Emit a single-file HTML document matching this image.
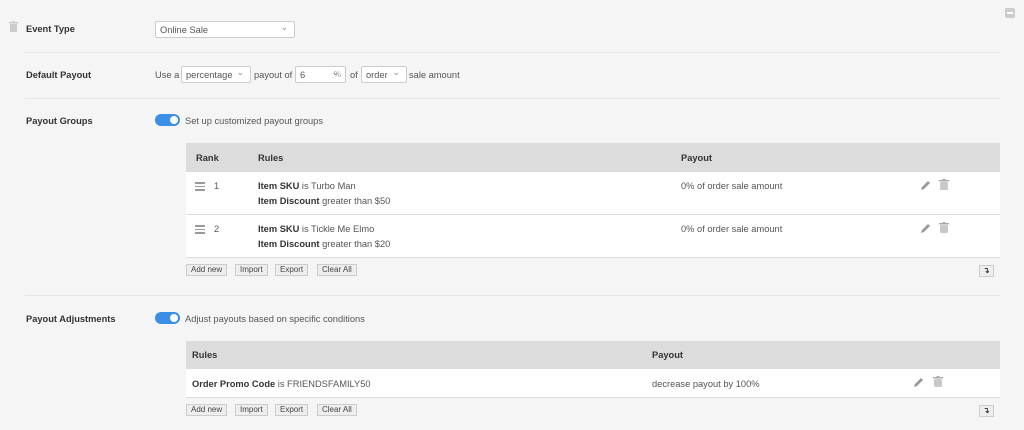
<!DOCTYPE html>
<html><head><meta charset="utf-8"><style>
*{margin:0;padding:0;box-sizing:border-box}
body{width:1024px;height:430px;background:#f5f5f5;font-family:"Liberation Sans",sans-serif;font-size:9.3px;color:#555;position:relative;overflow:hidden}
.a{position:absolute}
.lbl{font-weight:bold;color:#333;font-size:9.3px}
.hr{position:absolute;left:25px;width:975px;height:1px;background:#e6e6e6}
.sel{position:absolute;background:#fff;border:1px solid #ccc;border-radius:2px;height:17px;line-height:16px;padding-left:4px;color:#555}
.sel::after{content:"⌄";position:absolute;right:6px;top:-3px;font-size:9px;color:#888}
.tog{position:absolute;width:25px;height:12px;border-radius:6px;background:#3a8ee6}
.tog::after{content:"";position:absolute;right:2px;top:2px;width:8px;height:8px;border-radius:50%;background:#fff}
.th{position:absolute;left:186px;width:814px;background:#dcdcdc;font-weight:bold;color:#333}
.tr{position:absolute;left:186px;width:814px;background:#fff;border-bottom:1px solid #ddd}
.btn{position:absolute;height:12px;line-height:10px;border:1px solid #ccc;background:#eee;font-size:8px;padding:0 4px;color:#444}
b{color:#333}
.ico{position:absolute}
</style></head><body>
<svg class="ico" style="left:9px;top:21px" width="9" height="11" viewBox="0 0 9 11"><rect x="0" y="1" width="9" height="1.5" fill="#ccc"/><rect x="3" y="0" width="3" height="1.5" fill="#ccc"/><rect x="1" y="3" width="7" height="8" fill="#ccc"/></svg>
<div class="a lbl" style="left:26px;top:24px">Event Type</div>
<div class="sel" style="left:155px;top:21px;width:140px">Online Sale</div>
<div class="a" style="left:1005px;top:8px;width:10px;height:10px;background:#ccc;border-radius:2px"><div style="margin:4px 2px;height:2px;background:#fff"></div></div>
<div class="hr" style="top:52px"></div>
<div class="a lbl" style="left:26px;top:70px">Default Payout</div>
<div class="a" style="left:155px;top:70px">Use a</div>
<div class="sel" style="left:181px;top:66px;width:70px">percentage</div>
<div class="a" style="left:254px;top:70px">payout of</div>
<div class="sel" style="left:295px;top:66px;width:51px">6<span style="position:absolute;right:4px;color:#999;font-size:8px">%</span></div>
<div class="a" style="left:350px;top:70px">of</div>
<div class="sel" style="left:361px;top:66px;width:46px">order</div>
<div class="a" style="left:409px;top:70px">sale amount</div>
<div class="hr" style="top:98px"></div>
<div class="a lbl" style="left:26px;top:116px">Payout Groups</div>
<div class="tog" style="left:155px;top:114px"></div>
<div class="a" style="left:185px;top:116px">Set up customized payout groups</div>

<div class="th" style="top:143px;height:29px"></div>
<div class="a lbl" style="left:196px;top:153px">Rank</div>
<div class="a lbl" style="left:258px;top:153px">Rules</div>
<div class="a lbl" style="left:681px;top:153px">Payout</div>
<div class="tr" style="top:172px;height:43px"></div>
<div class="tr" style="top:215px;height:43px"></div>
<div class="a" style="left:195px;top:182px;width:10px"><div style="height:1.5px;background:#999;margin-bottom:2px"></div><div style="height:1.5px;background:#999;margin-bottom:2px"></div><div style="height:1.5px;background:#999"></div></div>
<div class="a" style="left:214px;top:181px">1</div>
<div class="a" style="left:258px;top:181px"><b>Item SKU</b> is Turbo Man</div>
<div class="a" style="left:258px;top:196px"><b>Item Discount</b> greater than $50</div>
<div class="a" style="left:681px;top:181px">0% of order sale amount</div>
<div class="a" style="left:195px;top:225px;width:10px"><div style="height:1.5px;background:#999;margin-bottom:2px"></div><div style="height:1.5px;background:#999;margin-bottom:2px"></div><div style="height:1.5px;background:#999"></div></div>
<div class="a" style="left:214px;top:224px">2</div>
<div class="a" style="left:258px;top:224px"><b>Item SKU</b> is Tickle Me Elmo</div>
<div class="a" style="left:258px;top:239px"><b>Item Discount</b> greater than $20</div>
<div class="a" style="left:681px;top:224px">0% of order sale amount</div>

<svg class="ico" style="left:920px;top:180px" width="11" height="11" viewBox="0 0 11 11"><path d="M1 10 L2 7 L8 1 L10 3 L4 9 Z" fill="#999"/></svg>
<svg class="ico" style="left:939px;top:179px" width="10" height="11" viewBox="0 0 10 11"><rect x="0" y="1" width="10" height="1.5" fill="#aaa"/><rect x="3.5" y="0" width="3" height="1.5" fill="#aaa"/><path d="M1 3h8v8H1z M3 4v6 M5 4v6 M7 4v6" fill="#aaa" stroke="#fff" stroke-width=".7"/></svg>
<svg class="ico" style="left:920px;top:223px" width="11" height="11" viewBox="0 0 11 11"><path d="M1 10 L2 7 L8 1 L10 3 L4 9 Z" fill="#999"/></svg>
<svg class="ico" style="left:939px;top:222px" width="10" height="11" viewBox="0 0 10 11"><rect x="0" y="1" width="10" height="1.5" fill="#aaa"/><rect x="3.5" y="0" width="3" height="1.5" fill="#aaa"/><path d="M1 3h8v8H1z M3 4v6 M5 4v6 M7 4v6" fill="#aaa" stroke="#fff" stroke-width=".7"/></svg>

<div class="btn" style="left:186px;top:264px">Add new</div>
<div class="btn" style="left:235px;top:264px">Import</div>
<div class="btn" style="left:275px;top:264px">Export</div>
<div class="btn" style="left:317px;top:264px">Clear All</div>
<div class="btn" style="left:979px;top:265px;padding:0 3px;font-weight:bold">↴</div>

<div class="hr" style="top:295px"></div>
<div class="a lbl" style="left:26px;top:314px">Payout Adjustments</div>
<div class="tog" style="left:155px;top:312px"></div>
<div class="a" style="left:185px;top:314px">Adjust payouts based on specific conditions</div>

<div class="th" style="top:341px;height:28px"></div>
<div class="a lbl" style="left:192px;top:350px">Rules</div>
<div class="a lbl" style="left:652px;top:350px">Payout</div>
<div class="tr" style="top:369px;height:29px"></div>
<div class="a" style="left:192px;top:379px"><b>Order Promo Code</b> is FRIENDSFAMILY50</div>
<div class="a" style="left:652px;top:379px">decrease payout by 100%</div>
<svg class="ico" style="left:913px;top:377px" width="11" height="11" viewBox="0 0 11 11"><path d="M1 10 L2 7 L8 1 L10 3 L4 9 Z" fill="#999"/></svg>
<svg class="ico" style="left:933px;top:376px" width="10" height="11" viewBox="0 0 10 11"><rect x="0" y="1" width="10" height="1.5" fill="#aaa"/><rect x="3.5" y="0" width="3" height="1.5" fill="#aaa"/><path d="M1 3h8v8H1z M3 4v6 M5 4v6 M7 4v6" fill="#aaa" stroke="#fff" stroke-width=".7"/></svg>

<div class="btn" style="left:186px;top:404px">Add new</div>
<div class="btn" style="left:235px;top:404px">Import</div>
<div class="btn" style="left:275px;top:404px">Export</div>
<div class="btn" style="left:317px;top:404px">Clear All</div>
<div class="btn" style="left:979px;top:405px;padding:0 3px;font-weight:bold">↴</div>
</body></html>
